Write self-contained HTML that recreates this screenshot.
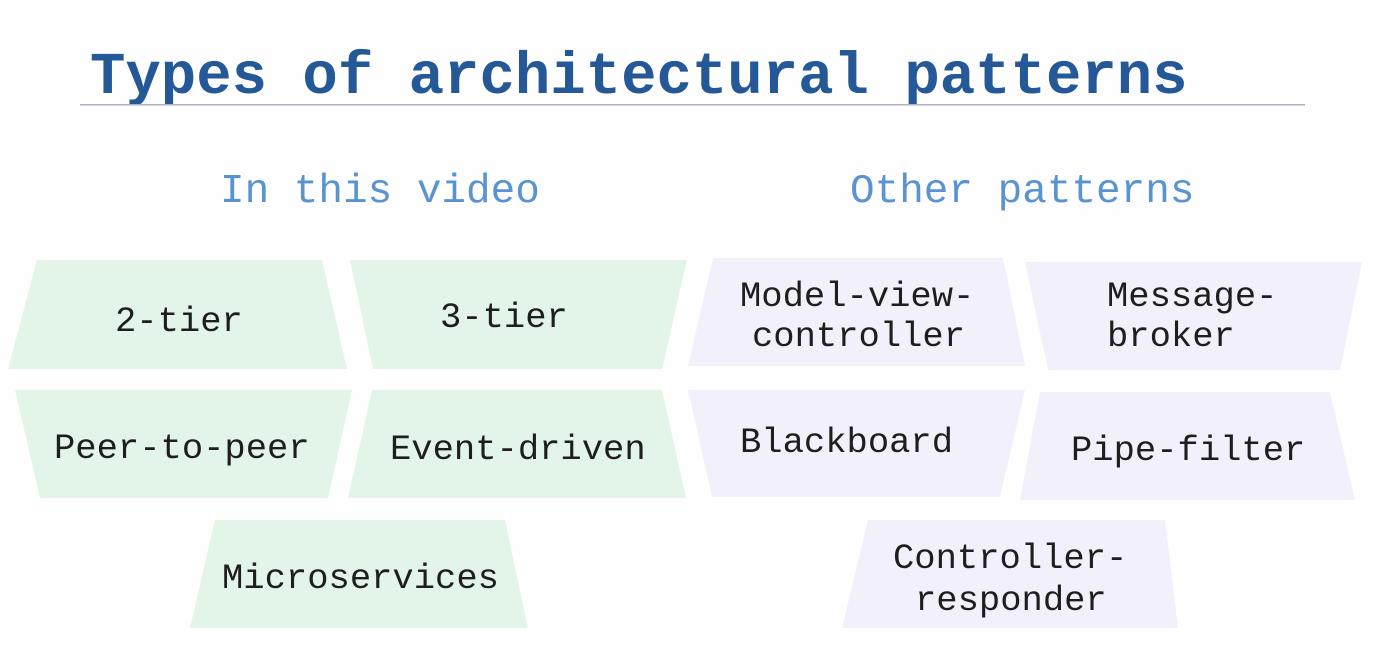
<!DOCTYPE html>
<html><head><meta charset="utf-8"><style>
html,body{margin:0;padding:0;background:#fff;width:1388px;height:662px;overflow:hidden}
svg{display:block}
text{font-family:"Liberation Mono",monospace}
</style></head><body>
<svg width="1388" height="662" viewBox="0 0 1388 662">
<rect width="1388" height="662" fill="#fefeff"/>
<text x="90" y="93" font-size="59" font-weight="bold" fill="#245896">Types of architectural patterns</text>
<rect x="80" y="104" width="1225" height="1.5" fill="#aab2c0"/>
<text x="220" y="202" font-size="41" fill="#5a94d0">In this video</text>
<text x="850" y="202" font-size="41" fill="#5a94d0">Other patterns</text>
<g fill="#e3f5e8">
<polygon points="37,260 322,260 347,369 8,369"/>
<polygon points="350,260 687,260 662,369 373,369"/>
<polygon points="15,390 352,390 328,498 40,498"/>
<polygon points="372,390 662,390 686,498 348,498"/>
<polygon points="215,520 505,520 528,628 190,628"/>
</g>
<g fill="#f2f1fb">
<polygon points="713,258 1003,258 1025,366 688,366"/>
<polygon points="1025,262 1362,262 1340,370 1048,370"/>
<polygon points="688,390 1025,390 1000,497 712,497"/>
<polygon points="1040,392 1330,392 1355,500 1020,500"/>
<polygon points="868,520 1165,520 1178,628 842,628"/>
</g>
<g font-size="35.5" fill="#1e1e1e">
<text x="115" y="331">2-tier</text>
<text x="440" y="327">3-tier</text>
<text x="54" y="458">Peer-to-peer</text>
<text x="390" y="459">Event-driven</text>
<text x="222" y="588">Microservices</text>
<text x="740" y="306">Model-view-</text>
<text x="752" y="346">controller</text>
<text x="1107" y="306">Message-</text>
<text x="1107" y="346">broker</text>
<text x="740" y="452">Blackboard</text>
<text x="1071" y="460">Pipe-filter</text>
<text x="893" y="568">Controller-</text>
<text x="915" y="610">responder</text>
</g>
</svg>
</body></html>
